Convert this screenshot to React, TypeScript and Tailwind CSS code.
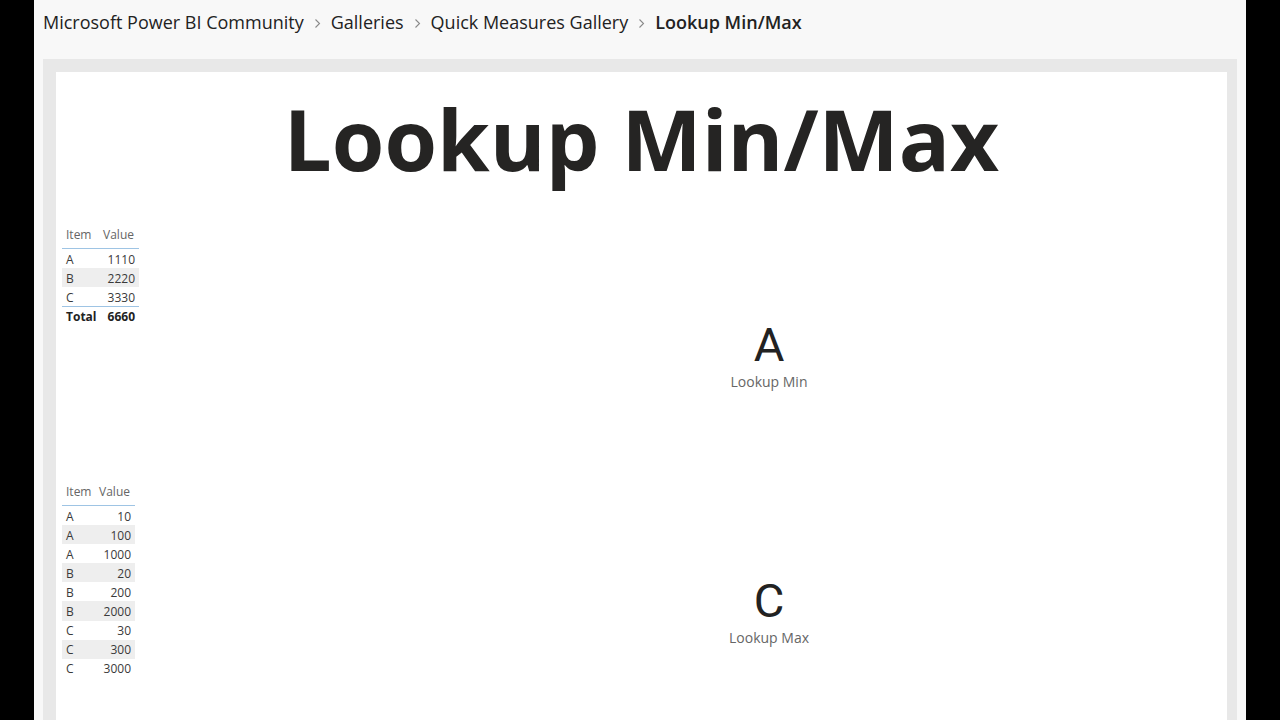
import React from "react";

const font = { fontFamily: '"Open Sans", "Noto Sans", sans-serif' };

function Chevron() {
  return (
    <svg width="7" height="11" viewBox="0 0 7 11" className="mx-[10px] mt-[2px]">
      <path d="M1.5 1.5 L5.5 5.5 L1.5 9.5" fill="none" stroke="#8a8a8a" strokeWidth="1.1" />
    </svg>
  );
}

const t1 = [
  ["A", "1110"],
  ["B", "2220"],
  ["C", "3330"],
];
const t2 = [
  ["A", "10"],
  ["A", "100"],
  ["A", "1000"],
  ["B", "20"],
  ["B", "200"],
  ["B", "2000"],
  ["C", "30"],
  ["C", "300"],
  ["C", "3000"],
];

function Table({ rows, width, total, top }: { rows: string[][]; width: string; total?: string; top: string }) {
  return (
    <div className={`${width} ${top} text-[12px] text-[#3a3a3a]`}>
      <div className="flex h-[28px] items-center border-b-[1.5px] border-[#9ec4e4] text-[#666]">
        <div className="flex-1 pl-[4px]">Item</div>
        <div className="pr-[5px]">Value</div>
      </div>
      {rows.map((r, i) => (
        <div key={i} className={`flex h-[19.1px] items-center pt-[2px] ${i % 2 === 1 ? "bg-[#eeeeee]" : ""}`}>
          <div className="flex-1 pl-[4px]">{r[0]}</div>
          <div className="pr-[4px]">{r[1]}</div>
        </div>
      ))}
      {total && (
        <div className="flex h-[20px] items-center pt-[1px] border-t-[1.5px] border-[#9ec4e4] font-bold text-[#222]">
          <div className="flex-1 pl-[4px]">Total</div>
          <div className="pr-[4px]">{total}</div>
        </div>
      )}
    </div>
  );
}

function Card({ value, label }: { value: string; label: string }) {
  return (
    <div className="flex flex-1 flex-col items-center pt-[100px]">
      <div className="text-[47px] leading-none text-[#222]" style={{ fontFamily: 'Roboto, "Open Sans", sans-serif' }}>
        {value}
      </div>
      <div className="mt-[5px] text-[14px] leading-[18px] text-[#666]">{label}</div>
    </div>
  );
}

export default function App() {
  return (
    <div className="flex h-[720px] w-[1280px] overflow-hidden bg-black" style={font}>
      <div className="ml-[34px] flex w-[1212px] flex-col bg-[#f8f8f8]">
        <div className="flex h-[59px] shrink-0 items-start pl-[9px] pt-[8px] text-[18px] leading-[28px] text-[#222]">
          <span>Microsoft Power BI Community</span>
          <span className="flex h-[28px] items-center"><Chevron /></span>
          <span>Galleries</span>
          <span className="flex h-[28px] items-center"><Chevron /></span>
          <span>Quick Measures Gallery</span>
          <span className="flex h-[28px] items-center"><Chevron /></span>
          <span className="font-semibold">Lookup Min/Max</span>
        </div>
        <div className="ml-[9px] flex w-[1194px] flex-1 flex-col bg-[#e8e8e8] pl-[13px] pr-[10px] pt-[13px]">
          <div className="flex flex-1 flex-col bg-white">
            <div className="flex h-[149px] shrink-0 items-start justify-center">
              <div className="mt-[8px] text-[85px] font-bold leading-[116px] text-[#252423]">Lookup Min/Max</div>
            </div>
            <div className="flex h-[256px] shrink-0">
              <div className="w-[255px] shrink-0 pl-[6px]">
                <Table rows={t1} width="w-[77px]" total="6660" top="mt-0" />
              </div>
              <Card value="A" label="Lookup Min" />
            </div>
            <div className="flex h-[256px] shrink-0">
              <div className="w-[255px] shrink-0 pl-[6px]">
                <Table rows={t2} width="w-[73px]" top="mt-[1px]" />
              </div>
              <Card value="C" label="Lookup Max" />
            </div>
          </div>
        </div>
      </div>
    </div>
  );
}
